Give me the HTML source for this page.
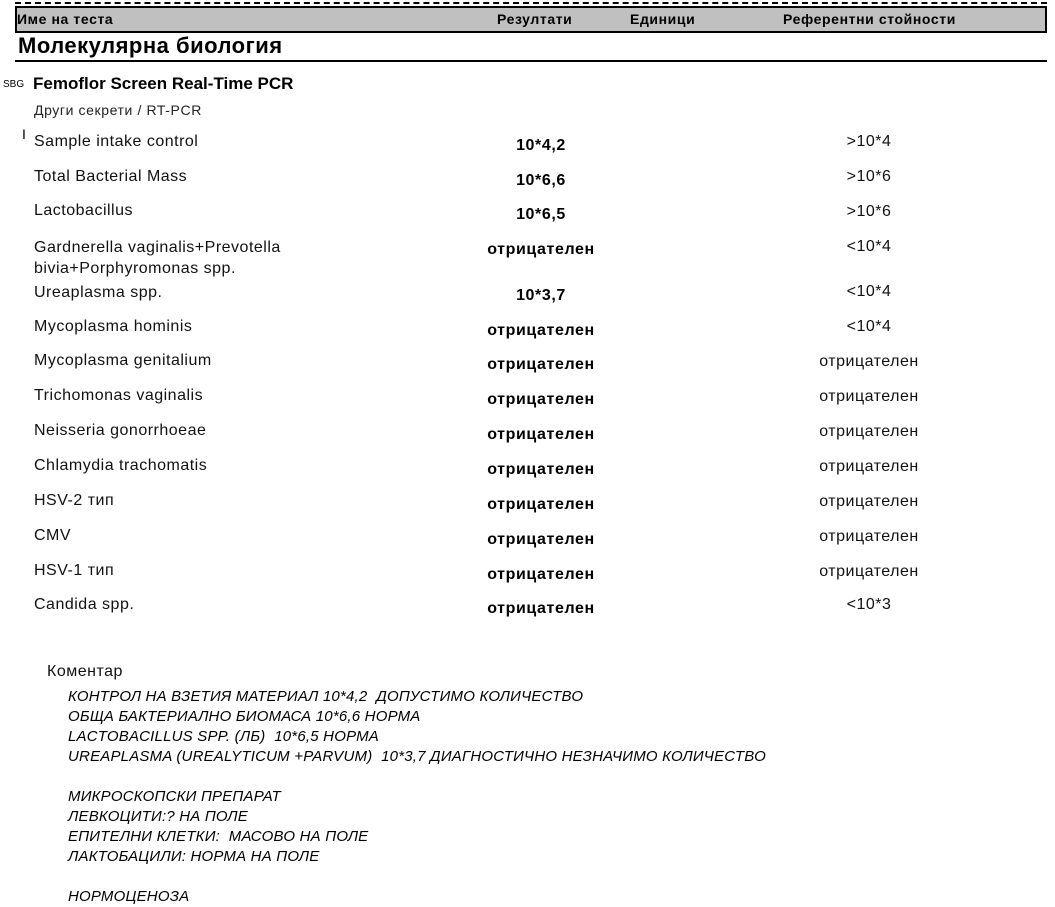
<!DOCTYPE html>
<html><head><meta charset="utf-8"><style>
body{margin:0;width:1055px;height:907px;background:#fff;position:relative;overflow:hidden;font-family:"Liberation Sans",Arial,sans-serif;color:#000}
div{position:absolute;white-space:nowrap}
.n{left:34px;font-size:16px;letter-spacing:0.5px;line-height:18px;color:#111}
.r{left:441px;width:200px;text-align:center;font-size:16px;letter-spacing:0.6px;font-weight:bold;line-height:18px}
.f{left:769px;width:200px;text-align:center;font-size:16px;letter-spacing:0.5px;line-height:18px;color:#111}
.c{left:68px;font-size:15px;letter-spacing:0.2px;font-style:italic;line-height:17px}
.h{top:11px;font-size:14px;letter-spacing:0.6px;font-weight:bold;line-height:16px}
</style></head><body>
<div style="left:15px;top:2px;width:1032px;border-top:2px dashed #000;height:0"></div>
<div style="left:15px;top:6px;width:1028px;height:23px;background:#c0c0c0;border:2px solid #000"></div>
<div class="h" style="left:17px">Име на теста</div>
<div class="h" style="left:497px">Резултати</div>
<div class="h" style="left:630px">Единици</div>
<div class="h" style="left:783px">Референтни стойности</div>
<div style="left:18px;top:33px;font-size:22px;letter-spacing:0.5px;font-weight:bold;line-height:25px">Молекулярна биология</div>
<div style="left:15px;top:60px;width:1032px;height:2px;background:#000"></div>
<div style="left:3px;top:79px;font-size:10px;line-height:12px">SBG</div>
<div style="left:33px;top:74px;font-size:17px;font-weight:bold;line-height:19px">Femoflor Screen Real-Time PCR</div>
<div style="left:34px;top:102px;font-size:14px;letter-spacing:0.6px;line-height:16px;color:#222">Други секрети / RT-PCR</div>
<div style="left:22px;top:126px;font-size:14px;line-height:16px">I</div>

<div class="n" style="top:133px">Sample intake control</div><div class="r" style="top:137px">10*4,2</div><div class="f" style="top:133px">&gt;10*4</div>
<div class="n" style="top:168px">Total Bacterial Mass</div><div class="r" style="top:172px">10*6,6</div><div class="f" style="top:168px">&gt;10*6</div>
<div class="n" style="top:202px">Lactobacillus</div><div class="r" style="top:206px">10*6,5</div><div class="f" style="top:203px">&gt;10*6</div>
<div class="n" style="top:239px">Gardnerella vaginalis+Prevotella</div><div class="n" style="top:260px">bivia+Porphyromonas spp.</div><div class="r" style="top:241px">отрицателен</div><div class="f" style="top:238px">&lt;10*4</div>
<div class="n" style="top:284px">Ureaplasma spp.</div><div class="r" style="top:287px">10*3,7</div><div class="f" style="top:283px">&lt;10*4</div>
<div class="n" style="top:318px">Mycoplasma hominis</div><div class="r" style="top:322px">отрицателен</div><div class="f" style="top:318px">&lt;10*4</div>
<div class="n" style="top:352px">Mycoplasma genitalium</div><div class="r" style="top:356px">отрицателен</div><div class="f" style="top:353px">отрицателен</div>
<div class="n" style="top:387px">Trichomonas vaginalis</div><div class="r" style="top:391px">отрицателен</div><div class="f" style="top:388px">отрицателен</div>
<div class="n" style="top:422px">Neisseria gonorrhoeae</div><div class="r" style="top:426px">отрицателен</div><div class="f" style="top:423px">отрицателен</div>
<div class="n" style="top:457px">Chlamydia trachomatis</div><div class="r" style="top:461px">отрицателен</div><div class="f" style="top:458px">отрицателен</div>
<div class="n" style="top:492px">HSV-2 тип</div><div class="r" style="top:496px">отрицателен</div><div class="f" style="top:493px">отрицателен</div>
<div class="n" style="top:527px">CMV</div><div class="r" style="top:531px">отрицателен</div><div class="f" style="top:528px">отрицателен</div>
<div class="n" style="top:562px">HSV-1 тип</div><div class="r" style="top:566px">отрицателен</div><div class="f" style="top:563px">отрицателен</div>
<div class="n" style="top:596px">Candida spp.</div><div class="r" style="top:600px">отрицателен</div><div class="f" style="top:596px">&lt;10*3</div>

<div style="left:47px;top:663px;font-size:16px;letter-spacing:0.5px;line-height:18px;color:#111">Коментар</div>
<div class="c" style="top:688px">КОНТРОЛ НА ВЗЕТИЯ МАТЕРИАЛ 10*4,2&nbsp; ДОПУСТИМО КОЛИЧЕСТВО</div>
<div class="c" style="top:708px">ОБЩА БАКТЕРИАЛНО БИОМАСА 10*6,6 НОРМА</div>
<div class="c" style="top:728px">LACTOBACILLUS SPP. (ЛБ)&nbsp; 10*6,5 НОРМА</div>
<div class="c" style="top:748px">UREAPLASMA (UREALYTICUM +PARVUM)&nbsp; 10*3,7 ДИАГНОСТИЧНО НЕЗНАЧИМО КОЛИЧЕСТВО</div>
<div class="c" style="top:788px">МИКРОСКОПСКИ ПРЕПАРАТ</div>
<div class="c" style="top:808px">ЛЕВКОЦИТИ:? НА ПОЛЕ</div>
<div class="c" style="top:828px">ЕПИТЕЛНИ КЛЕТКИ:&nbsp; МАСОВО НА ПОЛЕ</div>
<div class="c" style="top:848px">ЛАКТОБАЦИЛИ: НОРМА НА ПОЛЕ</div>
<div class="c" style="top:888px">НОРМОЦЕНОЗА</div>
</body></html>
